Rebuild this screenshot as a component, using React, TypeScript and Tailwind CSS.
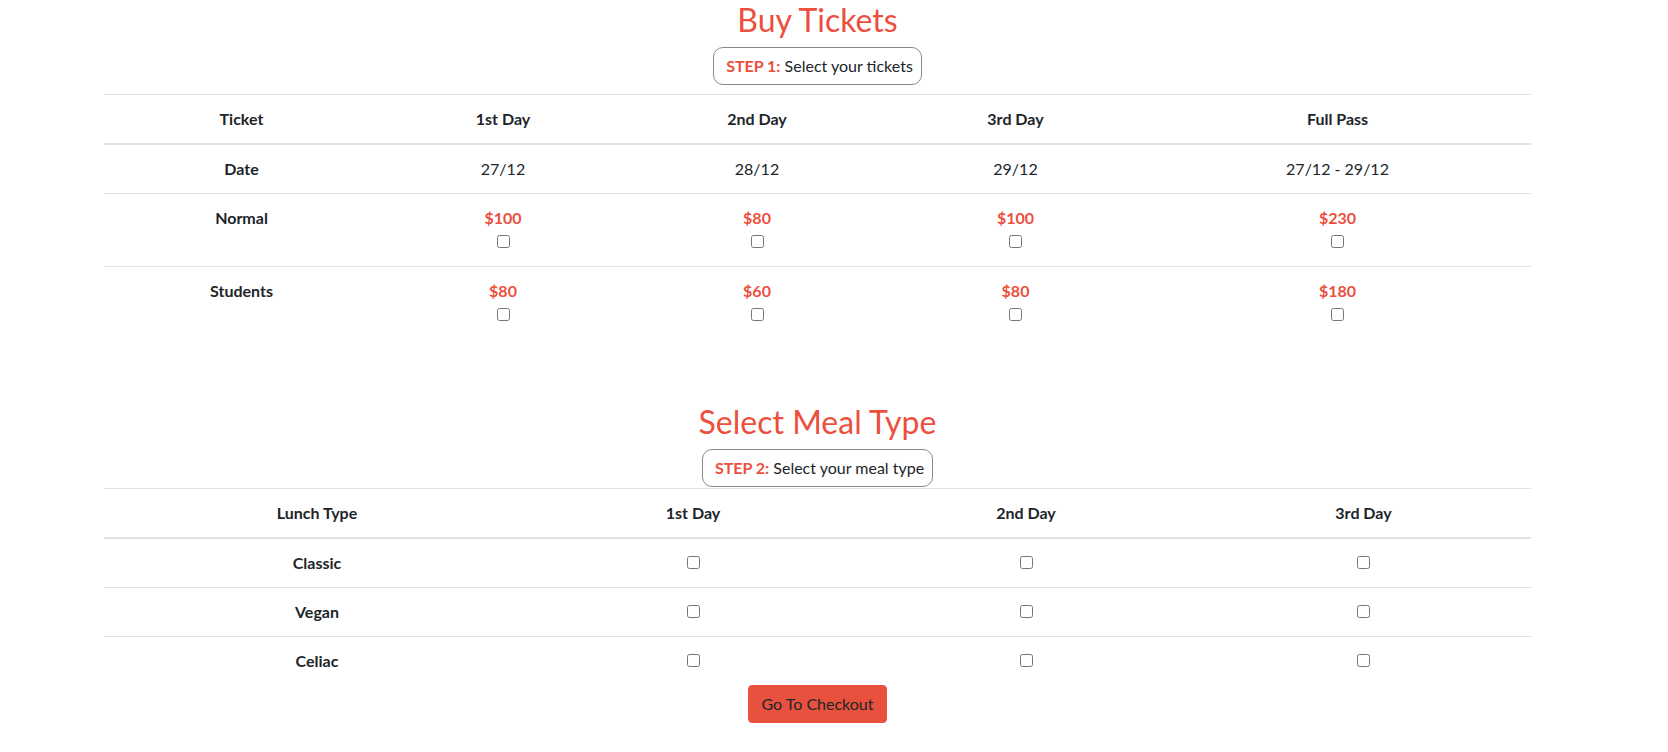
import React from "react";

const red = "text-[#ec4f3d]";

const ticketCols = ["w-[275px]", "w-[248px]", "w-[260px]", "w-[257px]", "w-[387px]"];
const ticketDays = [
  { label: "1st Day", date: "27/12", normal: "$100", students: "$80" },
  { label: "2nd Day", date: "28/12", normal: "$80", students: "$60" },
  { label: "3rd Day", date: "29/12", normal: "$100", students: "$80" },
  { label: "Full Pass", date: "27/12 - 29/12", normal: "$230", students: "$180" },
];

const mealCols = ["w-[426px]", "w-[326px]", "w-[340px]", "w-[335px]"];
const mealDays = ["1st Day", "2nd Day", "3rd Day"];
const meals = ["Classic", "Vegan", "Celiac"];

const cell = "border-t border-[#dee2e6] p-3 text-center align-top leading-6";

function StepBadge({ step, text }: { step: string; text: string }) {
  return (
    <div className="flex justify-center">
      <div className="rounded-[10px] border border-[#8a8a8a] py-[6px] pl-3 pr-2 text-[16px] leading-6">
        <b className={red}>{step}</b> {text}
      </div>
    </div>
  );
}

export default function App() {
  return (
    <div className="w-[1635px] bg-white px-[104px] font-['Lato','Open_Sans',sans-serif] text-[16px] text-[#212529]">
      <h1 className={`text-center text-[32px] leading-[40px] font-normal ${red}`}>Buy Tickets</h1>
      <div className="mt-[7px]">
        <StepBadge step="STEP 1:" text="Select your tickets" />
      </div>
      <table className="mt-[9px] w-full table-fixed border-collapse">
        <colgroup>
          {ticketCols.map((w) => (
            <col key={w} className={w} />
          ))}
        </colgroup>
        <thead>
          <tr>
            <th className={`${cell} border-b-2`}>Ticket</th>
            {ticketDays.map((d) => (
              <th key={d.label} className={`${cell} border-b-2`}>
                {d.label}
              </th>
            ))}
          </tr>
        </thead>
        <tbody>
          <tr>
            <th className={cell}>Date</th>
            {ticketDays.map((d) => (
              <td key={d.label} className={cell}>
                {d.date}
              </td>
            ))}
          </tr>
          <tr>
            <th className={cell}>Normal</th>
            {ticketDays.map((d) => (
              <th key={d.label} className={cell}>
                <div className={red}>{d.normal}</div>
                <input type="checkbox" />
              </th>
            ))}
          </tr>
          <tr>
            <th className={cell}>Students</th>
            {ticketDays.map((d) => (
              <th key={d.label} className={cell}>
                <div className={red}>{d.students}</div>
                <input type="checkbox" />
              </th>
            ))}
          </tr>
        </tbody>
      </table>

      <h1 className={`mt-[63px] text-center text-[32px] leading-[40px] font-normal ${red}`}>
        Select Meal Type
      </h1>
      <div className="mt-[7px]">
        <StepBadge step="STEP 2:" text="Select your meal type" />
      </div>
      <table className="mt-px w-full table-fixed border-collapse">
        <colgroup>
          {mealCols.map((w) => (
            <col key={w} className={w} />
          ))}
        </colgroup>
        <thead>
          <tr>
            <th className={`${cell} border-b-2`}>Lunch Type</th>
            {mealDays.map((d) => (
              <th key={d} className={`${cell} border-b-2`}>
                {d}
              </th>
            ))}
          </tr>
        </thead>
        <tbody>
          {meals.map((m) => (
            <tr key={m}>
              <th className={cell}>{m}</th>
              {mealDays.map((d) => (
                <td key={d} className={cell}>
                  <input type="checkbox" />
                </td>
              ))}
            </tr>
          ))}
        </tbody>
      </table>
      <div className="flex justify-center">
        <button className="rounded border border-[#e9513f] bg-[#e9513f] px-3 py-1.5 leading-6 text-[#212529]">
          Go To Checkout
        </button>
      </div>
    </div>
  );
}
